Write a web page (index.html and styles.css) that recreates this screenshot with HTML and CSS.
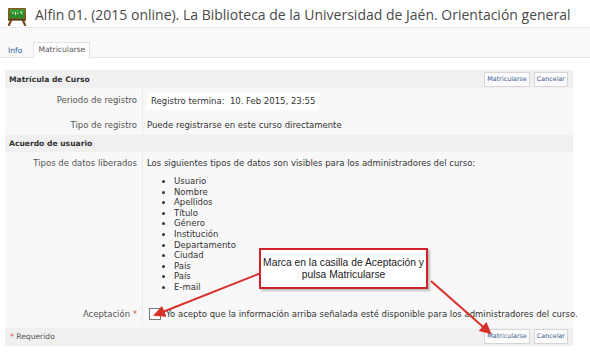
FILE: index.html
```html
<!DOCTYPE html>
<html lang="es">
<head>
<meta charset="utf-8">
<title>Matricularse</title>
<link rel="stylesheet" href="styles.css">
</head>
<body>
<div class="top">
  <svg class="logo" width="20" height="19" viewBox="0 0 20 19">
    <path d="M5 11 L2 18" stroke="#7a4a1c" stroke-width="2.2" stroke-linecap="round"/>
    <path d="M15 11 L18 18" stroke="#7a4a1c" stroke-width="2.2" stroke-linecap="round"/>
    <rect x="1" y="1" width="18" height="12" rx="1" fill="#8a5420"/>
    <rect x="2.5" y="2.5" width="15" height="9" fill="#2f8a2c"/>
    <rect x="2.5" y="2.5" width="15" height="3" fill="#3aa236"/>
    <path d="M5 6 h2 M8.5 5 v3 M10 6.5 h1.5 M13 5.5 q1 -1 2 0 q-1 2 0 2" stroke="#e8f5e0" stroke-width="0.9" fill="none"/>
    <rect x="1" y="12" width="18" height="1.6" fill="#5c3510"/>
  </svg>
  <h1 class="title">Alfin 01. (2015 online). La Biblioteca de la Universidad de Jaén. Orientación general</h1>
</div>
<div class="tabbar">
  <span class="tab">Info</span>
  <span class="tab tab-active">Matricularse</span>
</div>
<div class="panel">
  <div class="phead">
    <span class="ptitle">Matrícula de Curso</span>
    <div class="btns"><span class="btn">Matricularse</span><span class="btn">Cancelar</span></div>
  </div>
  <div class="row row-period">
    <div class="lbl">Periodo de registro</div>
    <div class="val"><span class="box">Registro termina:&nbsp; 10. Feb 2015, 23:55</span></div>
  </div>
  <div class="row row-type">
    <div class="lbl">Tipo de registro</div>
    <div class="val">Puede registrarse en este curso directamente</div>
  </div>
  <div class="section">Acuerdo de usuario</div>
  <div class="row row-data">
    <div class="lbl">Tipos de datos liberados</div>
    <div class="val">
      <p class="intro">Los siguientes tipos de datos son visibles para los administradores del curso:</p>
      <ul class="fields">
        <li>Usuario</li>
        <li>Nombre</li>
        <li>Apellidos</li>
        <li>Título</li>
        <li>Género</li>
        <li>Institución</li>
        <li>Departamento</li>
        <li>Ciudad</li>
        <li>País</li>
        <li>País</li>
        <li>E-mail</li>
      </ul>
    </div>
  </div>
  <div class="row row-accept">
    <div class="lbl">Aceptación <span class="req">*</span></div>
    <div class="val accept"><span class="check"></span>Yo acepto que la información arriba señalada esté disponible para los administradores del curso.</div>
  </div>
  <div class="pfoot">
    <span class="required"><span class="req">*</span> Requerido</span>
    <div class="btns"><span class="btn">Matricularse</span><span class="btn">Cancelar</span></div>
  </div>
</div>

<div class="callout">Marca en la casilla de Aceptación y<br>pulsa Matricularse</div>
<svg class="arrows" width="590" height="352" viewBox="0 0 590 352">
  <defs>
    <marker id="ah" markerWidth="6" markerHeight="6" refX="5" refY="3" orient="auto" markerUnits="strokeWidth">
      <path d="M0 0 L6 3 L0 6 Z" fill="#d8302b"/>
    </marker>
  </defs>
  <line x1="261" y1="273" x2="155" y2="315" stroke="#d8302b" stroke-width="2" marker-end="url(#ah)"/>
  <line x1="431" y1="281" x2="490" y2="333" stroke="#d8302b" stroke-width="2" marker-end="url(#ah)"/>
</svg>
</body>
</html>
```
FILE: styles.css
```css
html, body {
  margin: 0;
  padding: 0;
  background: #ffffff;
}
body {
  width: 590px;
  height: 352px;
  overflow: hidden;
  position: relative;
  font-family: "DejaVu Sans", Verdana, sans-serif;
  font-size: 8.5px;
  color: #333333;
}
.top {
  display: flex;
  align-items: center;
  gap: 8px;
  height: 27px;
  padding: 2px 0 0 7px;
  box-sizing: border-box;
}
.logo {
  flex: none;
  margin-top: 3px;
}
.title {
  margin: 0;
  font-family: "Open Sans", sans-serif;
  font-weight: normal;
  font-size: 14px;
  line-height: 20px;
  color: #4a4a4a;
  white-space: nowrap;
}
.tabbar {
  display: flex;
  align-items: flex-end;
  gap: 8px;
  height: 31px;
  padding-left: 5px;
  box-sizing: border-box;
  background: #f9f9f9;
  border-top: 1px solid #ececec;
  border-bottom: 1px solid #e2e2e2;
  font-size: 7.6px;
}
.tab {
  display: block;
  height: 14px;
  line-height: 14px;
  padding: 0 3px;
  color: #2c5c9c;
  margin-bottom: -1px;
}
.tab-active {
  background: #ffffff;
  color: #555555;
  border: 1px solid #e2e2e2;
  border-bottom-color: #ffffff;
  padding: 0 4px;
}
.panel {
  margin: 12px 0 0 5px;
  width: 568px;
  background: #f8f8f8;
}
.phead, .pfoot {
  display: flex;
  align-items: center;
  justify-content: space-between;
  height: 18px;
  padding: 0 5px 0 4px;
  background: #f0f0f0;
}
.ptitle, .section {
  font-weight: bold;
  font-size: 7.6px;
  color: #333333;
}
.btns {
  display: flex;
  gap: 4px;
}
.btn {
  display: block;
  height: 13px;
  line-height: 13px;
  padding: 0 2px;
  font-size: 6.4px;
  color: #3b5d8f;
  background: #fbfbfb;
  border: 1px solid #d6d6d6;
}
.row {
  display: grid;
  grid-template-columns: 138px 1fr;
}
.lbl {
  text-align: right;
  padding-right: 5px;
  color: #555555;
  border-right: 1px solid #ebebeb;
}
.val {
  padding-left: 4px;
  color: #333333;
}
.row-period {
  height: 28px;
}
.row-period .lbl {
  padding-top: 7px;
  line-height: 10px;
}
.row-period .val {
  padding-top: 5px;
}
.box {
  display: inline-block;
  background: #ffffff;
  height: 17px;
  line-height: 17px;
  padding: 0 4px;
  white-space: nowrap;
}
.row-type {
  height: 19px;
  line-height: 19px;
}
.section {
  height: 17px;
  line-height: 17px;
  padding-left: 4px;
  background: #f0f0f0;
}
.row-data .lbl, .row-data .val {
  padding-top: 6px;
  line-height: 10px;
}
.intro {
  margin: 0;
  line-height: 10px;
}
.fields {
  margin: 8px 0 10px 0;
  padding-left: 27px;
  line-height: 10.6px;
}
.row-accept {
  height: 23px;
  line-height: 23px;
}
.req {
  color: #d9534f;
}
.accept {
  display: flex;
  align-items: center;
  gap: 5px;
  padding-left: 6px;
  white-space: nowrap;
}
.check {
  display: block;
  width: 10px;
  height: 10px;
  background: #ffffff;
  border: 1px solid #777777;
}
.pfoot {
  margin-top: 2px;
  padding-left: 5px;
}
.required {
  color: #555555;
  font-size: 7.6px;
}
.callout {
  position: absolute;
  left: 259px;
  top: 248px;
  width: 169px;
  height: 41px;
  box-sizing: border-box;
  border: 2px solid #d0202a;
  background: #ffffff;
  box-shadow: 2px 2px 2px rgba(0,0,0,0.25);
  font-family: "Liberation Sans", Arial, sans-serif;
  font-size: 10.3px;
  line-height: 12px;
  color: #222222;
  text-align: center;
  padding-top: 7px;
}
.arrows {
  position: absolute;
  left: 0;
  top: 0;
  pointer-events: none;
}
```
